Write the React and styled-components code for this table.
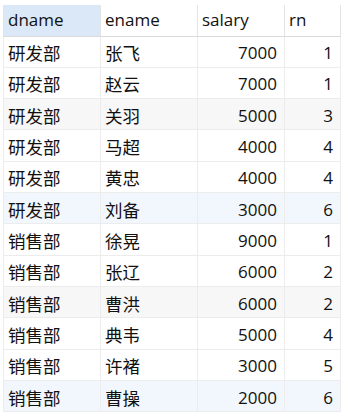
import React from 'react'
import styled, { createGlobalStyle } from 'styled-components';

const GlobalStyle = createGlobalStyle`
  body {
    margin: 0;
    background: #ffffff;
    font-family: "Open Sans", "Noto Sans CJK SC", sans-serif;
  }
`

const Wrapper = styled.div`
  padding: 5px 0 0 3px;
`

const Grid = styled.table`
  border-collapse: collapse;
  table-layout: fixed;
  width: 337px;
  font-size: 17px;
  line-height: 1;
  color: #111111;
`

const HeadRow = styled.tr`
  height: 31px;
`

const HeadCell = styled.th`
  padding: 0 0 2px 4px;
  text-align: left;
  font-weight: 400;
  background: ${p => p.active ? '#dae8f7' : '#ffffff'};
  border: 1px solid #e3e3e3;
  border-top: none;
  border-bottom-color: #dadada;
  white-space: nowrap;
  overflow: hidden;
`

const Row = styled.tr`
  height: 31.33px;
  background: ${p => p.tone === 'blue' ? '#f2f7fd' : p.tone === 'gray' ? '#f7f7f7' : '#ffffff'};
`

const Cell = styled.td`
  padding: ${p => p.num ? '2px 7px 0 0' : '2px 0 0 4px'};
  text-align: ${p => p.num ? 'right' : 'left'};
  border: 1px solid #ececec;
  font-family: ${p => p.num ? '"Open Sans", sans-serif' : '"Noto Sans CJK SC", sans-serif'};
  font-size: ${p => p.num ? '17px' : '17.5px'};
  white-space: nowrap;
  overflow: hidden;
`

const rows = [
  ['研发部', '张飞', 7000, 1],
  ['研发部', '赵云', 7000, 1],
  ['研发部', '关羽', 5000, 3],
  ['研发部', '马超', 4000, 4],
  ['研发部', '黄忠', 4000, 4],
  ['研发部', '刘备', 3000, 6],
  ['销售部', '徐晃', 9000, 1],
  ['销售部', '张辽', 6000, 2],
  ['销售部', '曹洪', 6000, 2],
  ['销售部', '典韦', 5000, 4],
  ['销售部', '许褚', 3000, 5],
  ['销售部', '曹操', 2000, 6],
]

const toneFor = (i) => {
  const n = i + 1
  if (n % 6 === 0) return 'blue'
  if (n % 3 === 0) return 'gray'
  return 'plain'
}

const App = () => {
  return (
    <Wrapper>
      <GlobalStyle />
      <Grid>
        <colgroup>
          <col style={{ width: 97 }} />
          <col style={{ width: 97 }} />
          <col style={{ width: 87 }} />
          <col style={{ width: 56 }} />
        </colgroup>
        <thead>
          <HeadRow>
            <HeadCell active>dname</HeadCell>
            <HeadCell>ename</HeadCell>
            <HeadCell>salary</HeadCell>
            <HeadCell>rn</HeadCell>
          </HeadRow>
        </thead>
        <tbody>
          {rows.map((r, i) => (
            <Row key={i} tone={toneFor(i)}>
              <Cell>{r[0]}</Cell>
              <Cell>{r[1]}</Cell>
              <Cell num>{r[2]}</Cell>
              <Cell num>{r[3]}</Cell>
            </Row>
          ))}
        </tbody>
      </Grid>
    </Wrapper>
  )
}

export default App
